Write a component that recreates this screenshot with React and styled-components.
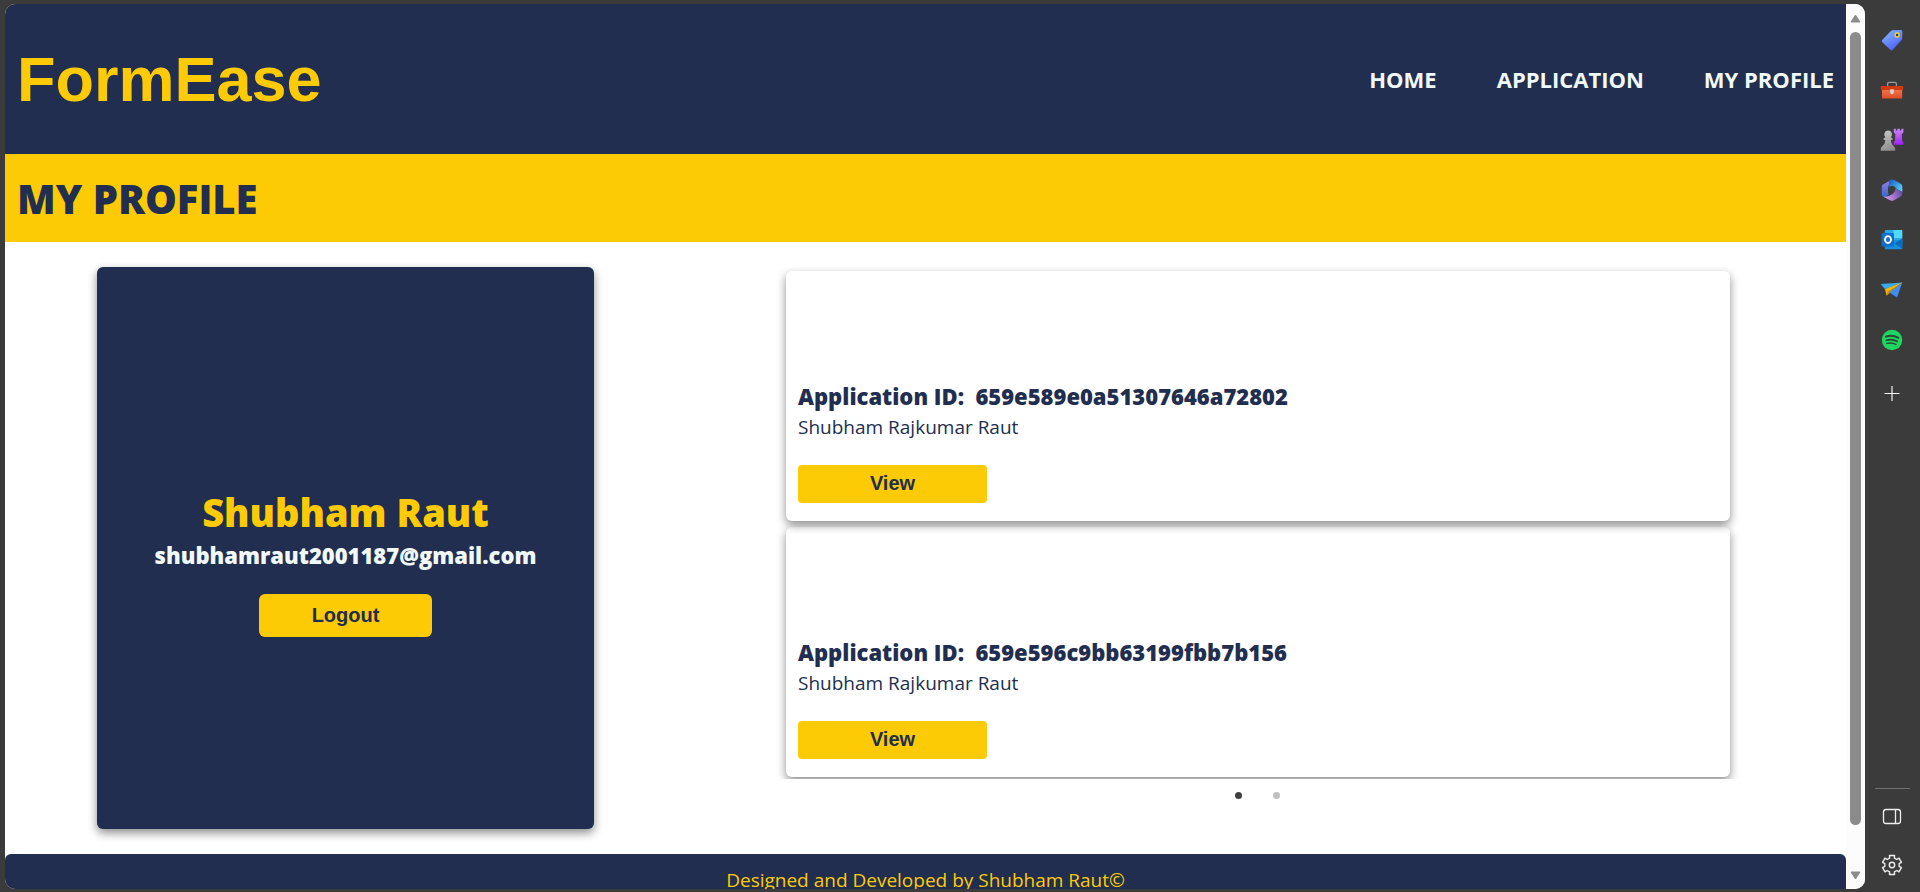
import React from "react";
import styled, { createGlobalStyle } from "styled-components";

const navy = "#222e50";
const yellow = "#fccb06";
const mint = "#f0f9f7";
const chrome = "#3b3b3b";
const sans = `"Open Sans", "Noto Sans", sans-serif`;
const arial = `"Liberation Sans", Arial, sans-serif`;

const GlobalStyle = createGlobalStyle`
  * { box-sizing: border-box; }
  body { margin: 0; background: ${chrome}; font-family: ${sans}; color: ${navy}; }
  h1, h2, h3, p, ul { margin: 0; padding: 0; }
`;

const Browser = styled.div`
  display: flex;
  height: 100vh;
  padding: 4px 0 3px 5px;
  background: ${chrome};
`;

const Viewport = styled.div`
  flex: 1;
  min-width: 0;
  display: flex;
  overflow: hidden;
  border-radius: 10px;
  background: #fff;
`;

const Page = styled.div`
  flex: 1;
  min-width: 0;
  overflow: hidden;
`;

const Header = styled.header`
  display: flex;
  align-items: center;
  justify-content: space-between;
  height: 150px;
  padding: 0 12px;
  background: ${navy};
`;

const Logo = styled.h1`
  font: bold 63px/74px ${arial};
  color: ${yellow};
`;

const Nav = styled.nav`
  display: flex;
  gap: 60px;
`;

const NavLink = styled.a`
  font-size: 22px;
  line-height: 32px;
  font-weight: 700;
  color: ${mint};
  text-decoration: none;
`;

const TitleBar = styled.div`
  padding: 17px 12px 15px;
  background: ${yellow};
`;

const Title = styled.h2`
  font-size: 40px;
  line-height: 56px;
  font-weight: 800;
`;

const Main = styled.main`
  display: grid;
  grid-template-columns: 497fr 944fr;
  gap: 192px;
  padding: 25px 116px 25px 92px;
`;

const shadow = "0 4px 10px rgba(0, 0, 0, 0.45)";

const ProfileCard = styled.section`
  display: flex;
  flex-direction: column;
  align-items: center;
  justify-content: center;
  min-height: 562px;
  padding-top: 26px;
  border-radius: 6px;
  background: ${navy};
  box-shadow: ${shadow};
`;

const UserName = styled.h2`
  font-size: 38px;
  line-height: 54px;
  font-weight: 800;
  color: ${yellow};
`;

const Email = styled.p`
  font-size: 22px;
  line-height: 32px;
  font-weight: 800;
  color: ${mint};
`;

const ActionButton = styled.button`
  width: ${(p) => p.$width};
  height: ${(p) => p.$height};
  margin-top: 23px;
  padding: 0 0 2px;
  border: 0;
  border-radius: ${(p) => p.$radius};
  background: ${yellow};
  color: ${navy};
  font: bold 20px/24px ${arial};
  cursor: pointer;
`;

const Applications = styled.section`
  min-width: 0;
`;

const CardList = styled.div`
  display: flex;
  flex-direction: column;
  gap: 6px;
  margin: 0 -12px;
  padding: 4px 12px 2px;
  overflow: hidden;
`;

const ApplicationCard = styled.article`
  display: flex;
  flex-direction: column;
  justify-content: flex-end;
  height: 250px;
  padding: 0 12px 18px;
  border-radius: 6px;
  box-shadow: ${shadow};
`;

const ApplicationId = styled.h3`
  font-size: 22px;
  line-height: 32px;
  font-weight: 800;
  white-space: pre;
`;

const Applicant = styled.p`
  font-size: 19px;
  line-height: 30px;
`;

const Dots = styled.div`
  display: flex;
  justify-content: center;
  padding: 3px 2px 0 0;
`;

const Dot = styled.button`
  display: grid;
  place-items: center;
  width: 38px;
  height: 26px;
  padding: 0;
  border: 0;
  background: none;
  &::before {
    content: "";
    width: 7px;
    height: 7px;
    border-radius: 50%;
    background: ${(p) => (p.$active ? "#404040" : "#bfbfbf")};
  }
`;

const Footer = styled.footer`
  padding: 10px;
  border-radius: 6px 6px 0 0;
  background: ${navy};
  color: ${yellow};
  font-size: 19px;
  line-height: 32px;
  text-align: center;
`;

const Scrollbar = styled.div`
  display: flex;
  flex-direction: column;
  align-items: center;
  justify-content: space-between;
  width: 19px;
  padding: 10px 0 9px;
  background: #fcfcfc;
`;

const Thumb = styled.div`
  flex: 1;
  width: 11px;
  margin: 9px 0 46px;
  border-radius: 6px;
  background: #8b8b8b;
`;

const Sidebar = styled.aside`
  display: flex;
  flex-direction: column;
  align-items: center;
  width: 55px;
  padding-top: 11px;
  padding-right: 1px;
`;

const SideButton = styled.button`
  display: grid;
  place-items: center;
  width: 40px;
  height: 50px;
  padding: 0;
  border: 0;
  background: none;
  cursor: pointer;
`;

const Spacer = styled.div`
  flex: 1;
`;

const AddButton = styled(SideButton)`
  height: 56px;
`;

const FooterButton = styled(SideButton)`
  height: 48px;
`;

const Divider = styled.hr`
  width: 35px;
  height: 1px;
  margin: 0 0 4px;
  border: 0;
  background: #727272;
`;

const Icon = ({ children }) => (
  <svg width="24" height="24" viewBox="0 0 24 24" fill="none" aria-hidden="true">
    {children}
  </svg>
);

const TagIcon = () => (
  <Icon>
    <defs>
      <linearGradient id="tag" x1="5" y1="4" x2="16" y2="22" gradientUnits="userSpaceOnUse">
        <stop stopColor="#7db2ff" />
        <stop offset="1" stopColor="#4f5df5" />
      </linearGradient>
    </defs>
    <path d="M12.4 2.2 20.6 2Q22.3 2 22.4 3.7L22.2 10.2Q22.2 11.2 21.5 12L12.7 21.8Q11.5 22.9 10.3 21.8L2.3 14.3Q1.3 13.2 2.2 12.1L10.9 2.9Q11.5 2.2 12.4 2.2Z" fill="url(#tag)" />
    <circle cx="17.1" cy="7" r="2" stroke="#ffd21c" strokeWidth="1.4" fill="#333a6e" />
  </Icon>
);

const BriefcaseIcon = () => (
  <Icon>
    <defs>
      <linearGradient id="case" x1="0" y1="11" x2="0" y2="21" gradientUnits="userSpaceOnUse">
        <stop stopColor="#f4764d" />
        <stop offset="1" stopColor="#dd4a26" />
      </linearGradient>
    </defs>
    <path d="M7.6 8.5V6Q7.6 4.4 9.2 4.4H14.8Q16.4 4.4 16.4 6V8.5" stroke="#a09a96" strokeWidth="1.3" />
    <rect x="2" y="11" width="20.2" height="9.6" rx="1.2" fill="url(#case)" />
    <path d="M1.6 8H22.4Q23.3 8 23.3 9V10.5Q23.3 12 21.8 12H2.2Q.7 12 .7 10.5V9Q.7 8 1.6 8Z" fill="#cf3a10" />
    <path d="M10.2 11.2H13.8V14.4Q13.8 16.2 12 16.2T10.2 14.4Z" fill="#d5d5d5" />
  </Icon>
);

const ChessIcon = () => (
  <Icon>
    <defs>
      <linearGradient id="pawn" x1="3" y1="3" x2="13" y2="23" gradientUnits="userSpaceOnUse">
        <stop stopColor="#c9c9c9" />
        <stop offset="1" stopColor="#858585" />
      </linearGradient>
      <linearGradient id="rook" x1="18" y1="0" x2="18" y2="17" gradientUnits="userSpaceOnUse">
        <stop stopColor="#cf8cff" />
        <stop offset="1" stopColor="#a01df0" />
      </linearGradient>
    </defs>
    <path d="M13.8.8H15.8V2.4H17.4V.8H19.8V2.4H21.4V.8H23.4V4.6L21.7 6.2 22.2 12.8 23.4 14.6V16.8H13.6V14.6L14.9 12.8 15.4 6.2 13.8 4.6Z" fill="url(#rook)" />
    <path d="M8.2 2.6A3.9 3.9 0 0 1 11 9.2L12.6 10.4V12H10.8Q11 16 13.8 18.2 15.2 19.2 15.2 20.8V22.8H.8V20.8Q.8 19.2 2.2 18.2 5.2 16 5.4 12H3.6V10.4L5.3 9.2A3.9 3.9 0 0 1 8.2 2.6Z" fill="url(#pawn)" />
  </Icon>
);

const OfficeIcon = () => (
  <Icon>
    <defs>
      <linearGradient id="off1" x1="4" y1="4" x2="6" y2="20" gradientUnits="userSpaceOnUse">
        <stop stopColor="#8f7be0" />
        <stop offset="1" stopColor="#2f65cf" />
      </linearGradient>
      <linearGradient id="off2" x1="10" y1="3" x2="22" y2="12" gradientUnits="userSpaceOnUse">
        <stop stopColor="#245fc4" />
        <stop offset="1" stopColor="#55d5fb" />
      </linearGradient>
      <linearGradient id="off3" x1="6" y1="21" x2="21" y2="14" gradientUnits="userSpaceOnUse">
        <stop stopColor="#d59aef" />
        <stop offset="1" stopColor="#6a50a8" />
      </linearGradient>
    </defs>
    <path d="M12 1.4 2.9 6.4Q1.8 7 1.8 8.4V16.4Q1.8 17.8 3 18.6L4.6 19.4 9 16.4Q8 15.6 8 14.2V8.6Z" fill="url(#off1)" />
    <path d="M9.2 2.8Q12 .6 14.6 2.2L21 6Q22.3 6.8 22.3 8.4V14L15.8 10.2Q15.6 9 14.4 8.4 12 7.2 8.4 9.4Z" fill="url(#off2)" />
    <path d="M22.3 12.8V15.8Q22.3 17.4 21 18.2L14 22.2Q12 23.4 10 22.2L3.6 18.8Q8 19 11.8 16.4 15.4 14 15.6 10.2L20.8 13.2Q22.2 14 22.3 12.8Z" fill="url(#off3)" />
  </Icon>
);

const OutlookIcon = () => (
  <Icon>
    <rect x="4.8" y="2" width="17.4" height="13" rx="1" fill="#28a8ea" />
    <rect x="13.5" y="2" width="8.7" height="8" fill="#50d9ff" />
    <path d="M4.8 12H22.3V20.3Q22.3 21.3 21.3 21.3H5.8Q4.8 21.3 4.8 20.3Z" fill="#1490df" />
    <path d="M22.3 10.6V20.6L14.2 15.4Z" fill="#0a6cbc" />
    <rect x="1.6" y="5" width="12.4" height="13.4" rx="1.2" fill="#0f6fc9" />
    <ellipse cx="8" cy="11.6" rx="3" ry="3.4" stroke="#fff" strokeWidth="1.8" />
  </Icon>
);

const PlaneIcon = () => (
  <Icon>
    <path d="M.7 6 22.3 4.4 5 11.2Z" fill="#35aaf2" />
    <path d="M22.3 4.4 5 11.2 6.6 17.8 10 12.8Z" fill="#f7b500" />
    <path d="M22.3 4.4 6.6 17.8 8 12Z" fill="#c98a08" />
    <path d="M22.3 4.4 17 19.4 9.4 14.4Z" fill="#3f8df5" />
    <path d="M22.3 4.4 8.4 13.2 5 11.2Z" fill="#f7b500" />
  </Icon>
);

const SpotifyIcon = () => (
  <Icon>
    <circle cx="12" cy="12" r="10.2" fill="#1ed760" />
    <g stroke="#2c4434" strokeLinecap="round">
      <path d="M5.9 8.6Q12.4 6.6 18.4 9.8" strokeWidth="2" />
      <path d="M6.4 12.2Q12 10.6 17.2 13.3" strokeWidth="1.7" />
      <path d="M6.8 15.4Q11.8 14.2 16 16.4" strokeWidth="1.4" />
    </g>
  </Icon>
);

const PlusIcon = () => (
  <Icon>
    <path d="M12 5V20" stroke="#a8a8a8" strokeWidth="2" />
    <path d="M4.500 12.500H19.500" stroke="#fff" />
  </Icon>
);

const PanelIcon = () => (
  <Icon>
    <rect x="3.500" y="4.500" width="17" height="14" rx="2.500" stroke="#eee" strokeWidth="1.300" />
    <path d="M15.500 4.500V18.500" stroke="#eee" strokeWidth="1.300" />
  </Icon>
);

/* Six-toothed cog outline, one tooth every 60 degrees starting at the top. */
const cogPath = () => {
  const points = [];
  for (let i = 0; i < 6; i += 1) {
    [[-15, 9.8], [15, 9.8], [19, 7.3], [41, 7.3]].forEach(([offset, radius]) => {
      const angle = ((i * 60 + offset - 90) * Math.PI) / 180;
      points.push(`${(12 + radius * Math.cos(angle)).toFixed(2)} ${(12 + radius * Math.sin(angle)).toFixed(2)}`);
    });
  }
  return `M${points.join("L")}Z`;
};

const CogIcon = () => (
  <Icon>
    <path d={cogPath()} stroke="#eee" strokeWidth="1.400" strokeLinejoin="round" />
    <circle cx="12" cy="12" r="2.700" stroke="#eee" strokeWidth="1.400" />
  </Icon>
);

const Arrow = ({ d }) => (
  <svg width="11" height="9" viewBox="0 0 11 9" aria-hidden="true">
    <path d={d} fill="#8b8b8b" stroke="#8b8b8b" strokeLinejoin="round" />
  </svg>
);

const shortcuts = [
  ["Shopping", TagIcon],
  ["Tools", BriefcaseIcon],
  ["Games", ChessIcon],
  ["Microsoft 365", OfficeIcon],
  ["Outlook", OutlookIcon],
  ["Drop", PlaneIcon],
  ["Spotify", SpotifyIcon],
];

const applications = [
  { id: "659e589e0a51307646a72802", name: "Shubham Rajkumar Raut" },
  { id: "659e596c9bb63199fbb7b156", name: "Shubham Rajkumar Raut" },
];

export default function App() {
  return (
    <Browser>
      <GlobalStyle />
      <Viewport>
        <Page>
          <Header>
            <Logo>FormEase</Logo>
            <Nav>
              <NavLink href="#home">HOME</NavLink>
              <NavLink href="#application">APPLICATION</NavLink>
              <NavLink href="#profile">MY PROFILE</NavLink>
            </Nav>
          </Header>
          <TitleBar>
            <Title>MY PROFILE</Title>
          </TitleBar>
          <Main>
            <ProfileCard>
              <UserName>Shubham Raut</UserName>
              <Email>shubhamraut2001187@gmail.com</Email>
              <ActionButton $width="35%" $height="43px" $radius="6px">
                Logout
              </ActionButton>
            </ProfileCard>
            <Applications>
              <CardList>
                {applications.map((item) => (
                  <ApplicationCard key={item.id}>
                    <ApplicationId>{`Application ID:  ${item.id}`}</ApplicationId>
                    <Applicant>{item.name}</Applicant>
                    <ActionButton $width="189px" $height="38px" $radius="4px">
                      View
                    </ActionButton>
                  </ApplicationCard>
                ))}
              </CardList>
              <Dots>
                <Dot $active aria-label="Slide 1" />
                <Dot aria-label="Slide 2" />
              </Dots>
            </Applications>
          </Main>
          <Footer>Designed and Developed by Shubham Raut©</Footer>
        </Page>
        <Scrollbar>
          <Arrow d="M5.500 1 10 8H1Z" />
          <Thumb />
          <Arrow d="M5.500 8 10 1H1Z" />
        </Scrollbar>
      </Viewport>
      <Sidebar>
        {shortcuts.map(([label, Glyph]) => (
          <SideButton key={label} aria-label={label}>
            <Glyph />
          </SideButton>
        ))}
        <AddButton aria-label="Add">
          <PlusIcon />
        </AddButton>
        <Spacer />
        <Divider />
        <FooterButton aria-label="Toggle sidebar">
          <PanelIcon />
        </FooterButton>
        <FooterButton aria-label="Settings">
          <CogIcon />
        </FooterButton>
      </Sidebar>
    </Browser>
  );
}
